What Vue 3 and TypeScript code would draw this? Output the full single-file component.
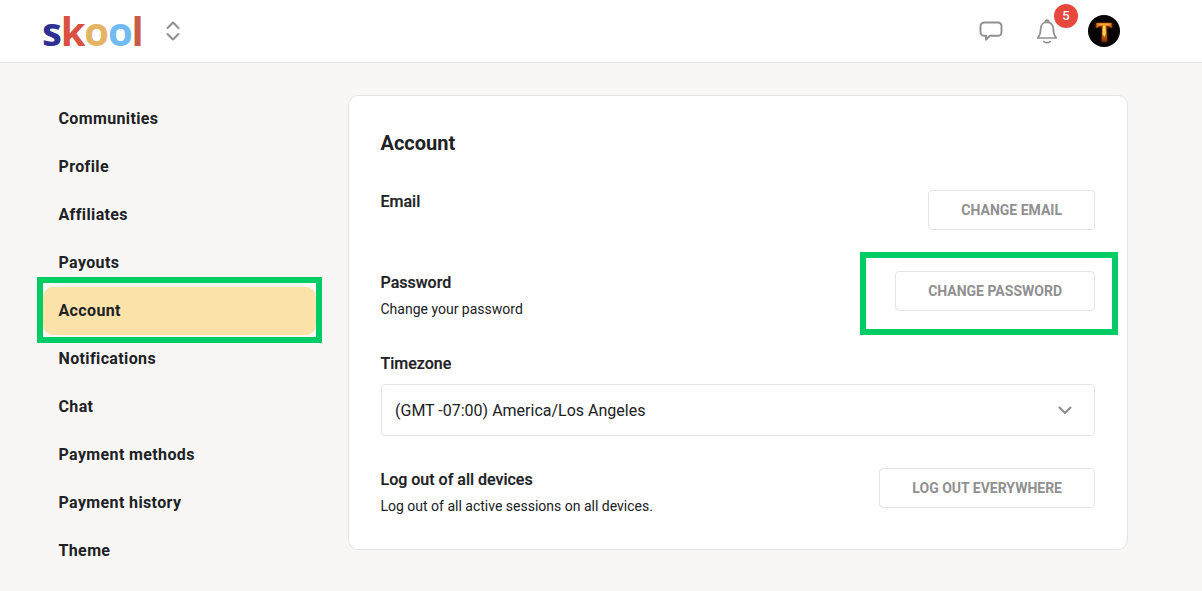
<script setup lang="ts">
const navItems: string[] = ['Communities','Profile','Affiliates','Payouts','Account','Notifications','Chat','Payment methods','Payment history','Theme'];
</script>

<template>
  <div class="page">
    <header class="topbar">
      <div class="brand">
        <div class="logo"><span class="s">s</span><span class="k">k</span><span class="o1">o</span><span class="o2">o</span><span class="l">l</span></div>
        <svg class="switch" width="16" height="22" viewBox="0 0 16 22" fill="none" stroke="#8f8f8f" stroke-width="2" stroke-linecap="round" stroke-linejoin="round"><path d="M2.5 8 8 2.5 13.5 8"/><path d="M2.5 14 8 19.5 13.5 14"/></svg>
      </div>
      <div class="actions">
        <svg class="chat" width="24" height="22" viewBox="0 0 24 22" fill="none" stroke="#909090" stroke-width="1.9" stroke-linejoin="round"><path d="M5.5 1.5h13c2.4 0 4 1.500 4 3.800v5.700c0 2.300-1.600 3.800-4 3.800h-7.600l-4 3.900.1-3.900H5.500c-2.400 0-4-1.500-4-3.800V5.300c0-2.300 1.600-3.800 4-3.800z"/></svg>
        <div class="bell-wrap">
          <svg width="22" height="26" viewBox="0 0 22 26" fill="none" stroke="#909090" stroke-width="1.7" stroke-linecap="round" stroke-linejoin="round"><path d="M11 3.200c-3.900 0-6.300 2.900-6.300 6.800 0 4.800-1 6.600-3 9h18.600c-2-2.400-3-4.200-3-9 0-3.900-2.400-6.800-6.300-6.800z"/><path d="M9.300 3.300C9.400 2 10 1.200 11 1.200s1.600.8 1.700 2.100"/><path d="M7.800 22.600c1.900 1.300 4.500 1.300 6.400 0"/></svg>
          <span class="badge">5</span>
        </div>
        <svg class="avatar" width="32" height="32" viewBox="0 0 32 32">
          <defs>
            <linearGradient id="fire" x1="0" y1="0" x2="0" y2="1"><stop offset="0" stop-color="#d8701c"/><stop offset="0.5" stop-color="#e8921f"/><stop offset="1" stop-color="#8a3008"/></linearGradient>
            <filter id="glow" x="-30%" y="-30%" width="160%" height="160%"><feGaussianBlur stdDeviation="0.9"/></filter>
          </defs>
          <circle cx="16" cy="16" r="16" fill="#050302"/>
          <path d="M8 8h16v5.500l-2-1.800-3.500-.2.700 15h-5.400l.5-15-3.800.2L8 13.500z" fill="#c0400f" filter="url(#glow)"/>
          <path d="M8.500 8h15v5l-1.800-1.700-3.600-.2.700 15.300h-5l.5-15.300-3.500.2-2.300 1.700z" fill="url(#fire)"/>
          <path d="M15 10.500h2.300l.3 8.500-1.200 3-1.500-3z" fill="#fbd95a"/>
          <path d="M10.500 9.200h11" stroke="#f7b53c" stroke-width="1.200" fill="none"/>
        </svg>
      </div>
    </header>

    <main class="content">
      <nav class="side">
        <a v-for="item in navItems" :key="item" class="nav-item" :class="{ active: item === 'Account' }">
          {{ item }}
          <span v-if="item === 'Account'" class="frame frame-nav"></span>
        </a>
      </nav>

      <section class="card">
        <h1 class="title">Account</h1>

        <div class="row row-email">
          <div class="label">Email</div>
          <button class="btn">CHANGE EMAIL</button>
        </div>

        <div class="row row-pass">
          <div>
            <div class="label">Password</div>
            <div class="sub">Change your password</div>
          </div>
          <button class="btn btn-pass">CHANGE PASSWORD<span class="frame frame-btn"></span></button>
        </div>

        <div class="label tz-label">Timezone</div>
        <div class="select">
          <span>(GMT -07:00) America/Los Angeles</span>
          <svg width="14" height="9" viewBox="0 0 14 9" fill="none" stroke="#8a8a8a" stroke-width="2" stroke-linecap="round" stroke-linejoin="round"><path d="M1.500 1.500 7 7l5.500-5.500"/></svg>
        </div>

        <div class="row row-logout">
          <div>
            <div class="label">Log out of all devices</div>
            <div class="sub">Log out of all active sessions on all devices.</div>
          </div>
          <button class="btn">LOG OUT EVERYWHERE</button>
        </div>
      </section>
    </main>
  </div>
</template>

<style>
html, body { margin: 0; background: #f8f7f5; }
</style>

<style scoped>
.page {
  height: 591px;
  overflow: hidden;
  background: #f8f7f5;
  font-family: Roboto, "Liberation Sans", sans-serif;
  color: #202124;
}
.topbar {
  height: 62px;
  background: #fff;
  border-bottom: 1px solid #e4e4e4;
  display: flex;
  justify-content: space-between;
  align-items: center;
  padding: 0 82px 0 42px;
}
.brand { display: flex; align-items: center; gap: 23px; }
.logo {
  font-family: "Open Sans", sans-serif;
  font-weight: 700;
  font-size: 40px;
  line-height: 40px;
  letter-spacing: -1.2px;
}
.s { color: #2e3192; }
.k { color: #da5140; }
.o1 { color: #e4b566; }
.o2 { color: #70bbf1; }
.l { color: #c85b47; }
.switch { display: block; }
.actions { display: flex; align-items: center; }
.chat { display: block; margin-right: 33px; margin-top: 2px; }
.bell-wrap { position: relative; width: 22px; height: 26px; margin-right: 30px; margin-top: 2px; }
.bell-wrap svg { display: block; }
.badge {
  position: absolute;
  left: 18px;
  top: -15px;
  width: 24px;
  height: 24px;
  border-radius: 50%;
  background: #e8483c;
  color: #fff;
  font-size: 13px;
  font-weight: 500;
  line-height: 24px;
  text-align: center;
}
.avatar { display: block; }
.content {
  display: flex;
  align-items: flex-start;
  padding: 32px 74px 0 43px;
}
.side { width: 273px; margin-right: 32px; flex: none; }
.nav-item {
  position: relative;
  box-sizing: border-box;
  display: flex;
  align-items: center;
  height: 48px;
  padding: 0 0 2px 15.500px;
  border-radius: 10px;
  font-size: 16px;
  font-weight: 700;
  letter-spacing: 0.37px;
  color: #202124;
}
.nav-item.active { background: #fae2a9; }
.frame {
  position: absolute;
  box-sizing: border-box;
  border: 6px solid #00cc66;
  pointer-events: none;
}
.frame-nav { left: -6px; right: -6px; top: -10px; bottom: -8px; }
.frame-btn { left: -36px; right: -24px; top: -20px; bottom: -25px; }
.card {
  flex: 1;
  box-sizing: border-box;
  height: 455px;
  background: #fff;
  border: 1px solid #e4e4e4;
  border-radius: 10px;
  padding: 32px 32px 0;
}
.title {
  margin: 0 0 0 -0.500px;
  font-size: 20px;
  font-weight: 700;
  line-height: 30px;
  color: #202124;
}
.row { display: flex; justify-content: space-between; align-items: flex-start; }
.row-email { margin-top: 32px; height: 40px; }
.row-pass { margin-top: 41px; }
.label {
  margin-left: -0.500px;
  margin-top: 1px;
  font-size: 16px;
  font-weight: 500;
  line-height: 22px;
  -webkit-text-stroke: 0.2px #202124;
  color: #202124;
}
.sub { margin: 5px 0 0 -0.500px; font-size: 14px; line-height: 20px; color: #202124; }
.btn {
  position: relative;
  box-sizing: border-box;
  height: 40px;
  padding: 0 32px;
  background: #fff;
  border: 1px solid #e4e4e4;
  border-radius: 4px;
  font-family: inherit;
  font-size: 14px;
  font-weight: 700;
  color: #909090;
}
.tz-label { margin-top: 34px; }
.select {
  box-sizing: border-box;
  margin-top: 9px;
  height: 52px;
  display: flex;
  align-items: center;
  justify-content: space-between;
  padding: 0 22px 0 13px;
  border: 1px solid #e4e4e4;
  border-radius: 4px;
  font-size: 16px;
  color: #202124;
}
.row-logout { margin-top: 32px; }
</style>
